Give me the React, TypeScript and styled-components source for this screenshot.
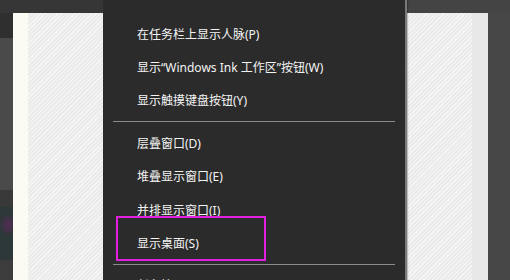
import styled, { createGlobalStyle } from 'styled-components';

const GlobalStyle = createGlobalStyle`
  html, body {
    margin: 0;
    padding: 0;
    width: 510px;
    height: 280px;
    overflow: hidden;
    background: #474747;
  }
  #root {
    width: 510px;
    height: 280px;
  }
`;

type MenuEntry = { label: string } | { separator: true };

const menuEntries: MenuEntry[] = [
  { label: '在任务栏上显示人脉(P)' },
  { label: '显示“Windows Ink 工作区”按钮(W)' },
  { label: '显示触摸键盘按钮(Y)' },
  { separator: true },
  { label: '层叠窗口(D)' },
  { label: '堆叠显示窗口(E)' },
  { label: '并排显示窗口(I)' },
  { label: '显示桌面(S)' },
  { separator: true },
  { label: '任务管理器(K)' },
];

const App = () => {
  return (
    <Screen>
      <GlobalStyle />
      <TopBand>
        <BandLeft />
        <BandRight />
      </TopBand>
      <Desktop>
        <SideStrip>
          <StripBlock $h={25} $bg="#2f2f2f" />
          <StripBlock $h={152} $bg="#4a4a4a" />
          <StripBlock $h={17} $bg="#393939" />
          <StripBlock $h={53} $bg="#2d3838">
            <Blob />
          </StripBlock>
          <StripBlock $h={20} $bg="#3c3c3c" />
        </SideStrip>
        <Margin />
        <Paper />
        <PaperEdge />
        <RightStrip />
      </Desktop>

      <Menu>
        {menuEntries.map((entry, i) =>
          'separator' in entry ? (
            <Separator key={i} />
          ) : (
            <MenuItem key={i}>{entry.label}</MenuItem>
          )
        )}
      </Menu>

      <Highlight />
    </Screen>
  );
};

export default App;

const Screen = styled.div`
  position: relative;
  width: 510px;
  height: 280px;
  overflow: hidden;
  display: flex;
  flex-direction: column;
  font-family: 'Noto Sans', 'Noto Sans CJK SC', sans-serif;
`;

const TopBand = styled.div`
  display: flex;
  height: 13px;
  flex-shrink: 0;
`;

const BandLeft = styled.div`
  width: 103px;
  background: #363636;
`;

const BandRight = styled.div`
  flex: 1;
  background: #444444;
`;

const Desktop = styled.div`
  display: flex;
  flex: 1;
`;

const SideStrip = styled.div`
  width: 13px;
  display: flex;
  flex-direction: column;
`;

const StripBlock = styled.div<{ $h: number; $bg: string }>`
  position: relative;
  height: ${(p) => p.$h}px;
  flex-shrink: 0;
  background: ${(p) => p.$bg};
  overflow: hidden;
`;

const Blob = styled.div`
  position: absolute;
  left: 2px;
  top: 10px;
  width: 12px;
  height: 16px;
  border-radius: 50%;
  background: #4b2f4f;
  filter: blur(2px);
`;

const Margin = styled.div`
  width: 15px;
  background: #fbfbf3;
`;

const Paper = styled.div`
  width: 444px;
  background-color: #ebebeb;
  background-image: repeating-linear-gradient(
    135deg,
    rgba(255, 255, 255, 0.55) 0px,
    rgba(255, 255, 255, 0.55) 1px,
    transparent 1px,
    transparent 3px
  );
`;

const PaperEdge = styled.div`
  width: 16px;
  background: #e8e8e8;
`;

const RightStrip = styled.div`
  flex: 1;
  background: #474747;
`;

const Menu = styled.div`
  position: absolute;
  left: 103px;
  top: 0;
  width: 302px;
  height: 300px;
  background: #2b2b2b;
  border-right: 2px solid #7a7a7a;
  box-shadow: 1px 0 1px rgba(0, 0, 0, 0.2);
  padding-top: 17px;
  display: flex;
  flex-direction: column;
`;

const MenuItem = styled.div`
  height: 33.4px;
  display: flex;
  align-items: center;
  padding-left: 34px;
  color: #f4f4f4;
  font-size: 12px;
  white-space: nowrap;
`;

const Separator = styled.div`
  height: 1px;
  margin: 4px 10px 4px 10px;
  background: #8a8a8a;
`;

const Highlight = styled.div`
  position: absolute;
  left: 116px;
  top: 216px;
  width: 146px;
  height: 41px;
  border: 2px solid #e01fe0;
`;
